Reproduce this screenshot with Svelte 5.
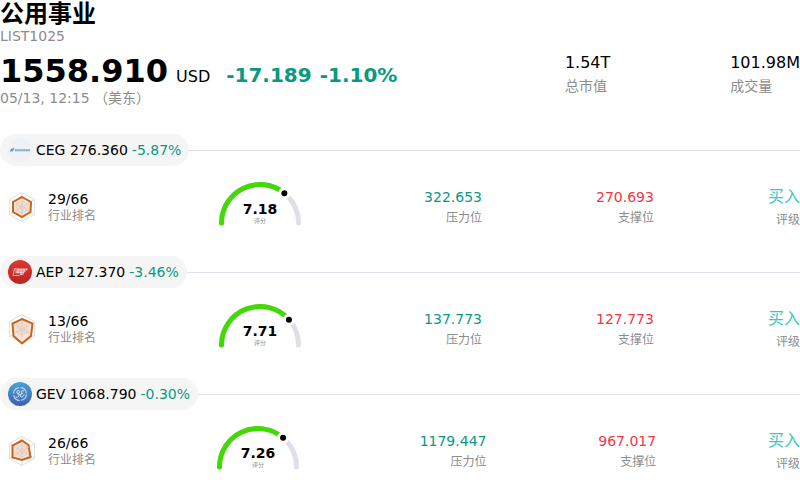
<script>
  const stocks = [
    {
      code: 'CEG', price: '276.360', change: '-5.87%', rank: '29/66', score: 7.18,
      pressure: '322.653', support: '270.693', rating: '买入',
      radar: '22,12 31,17 30.5,27 22,32 13,27 13,17',
    },
    {
      code: 'AEP', price: '127.370', change: '-3.46%', rank: '13/66', score: 7.71,
      pressure: '137.773', support: '127.773', rating: '买入',
      radar: '22,12 32.5,16.5 31,29 22,36.5 13.5,29 12.5,16.5',
    },
    {
      code: 'GEV', price: '1068.790', change: '-0.30%', rank: '26/66', score: 7.26,
      pressure: '1179.447', support: '967.017', rating: '买入',
      radar: '22,11.5 28.5,16 30.5,28 22,31 12.5,28.5 12.5,16.5',
    },
  ];

  const R = 38.5;
  const BASE = 45;

  function point(degrees) {
    const a = (degrees * Math.PI) / 180;
    return { x: 50 - R * Math.cos(a), y: BASE - R * Math.sin(a) };
  }

  function arc(degrees) {
    const p = point(degrees);
    return `M11.5 ${BASE}A${R} ${R} 0 0 1 ${p.x} ${p.y}`;
  }
</script>

<main>
  <header>
    <div class="summary">
      <h1>公用事业</h1>
      <p class="muted">LIST1025</p>
      <div class="quote">
        <strong class="price">1558.910</strong>
        <span class="currency">USD</span>
        <strong class="delta"><span>-17.189</span><span>-1.10%</span></strong>
      </div>
      <p class="muted">05/13, 12:15 （美东）</p>
    </div>
    <dl class="stat">
      <dt>总市值</dt>
      <dd>1.54T</dd>
    </dl>
    <dl class="stat">
      <dt>成交量</dt>
      <dd>101.98M</dd>
    </dl>
  </header>

  {#each stocks as s (s.code)}
    {@const dot = point(s.score * 18)}
    <section>
      <div class="title">
        <div class="pill">
          <svg class="logo" viewBox="0 0 24 24" aria-hidden="true">
            {#if s.code === 'CEG'}
              <circle cx="12" cy="12" r="12" fill="#eff2f5" />
              <path d="M1.5 13.5L3.5 10.5H7L4.5 13.5Z" fill="#5b9fc6" />
              <path d="M3.5 10.5L6.5 9.8L5 12Z" fill="#c6b84c" />
              <path d="M7 12.2h1.6M9 12.2h1.2M10.7 12.2h1.2M12.4 12.2h1.4M14.2 12.2h1.2M15.8 12.2h1.6M18 12.2h1.2M19.7 12.2h2" stroke="#6fa0d0" stroke-width="2" />
              <path d="M7 12.4h15" stroke="#8bb5dd" stroke-width="1.4" />
            {:else if s.code === 'AEP'}
              <defs>
                <linearGradient id="red" x1="0" y1="0" x2="0" y2="1">
                  <stop offset="0" stop-color="#dc3934" />
                  <stop offset="1" stop-color="#b92424" />
                </linearGradient>
              </defs>
              <circle cx="12" cy="12" r="12" fill="url(#red)" />
              <path d="M6.5 8.5H20L18.8 11H17.5L16.8 13H15.5L15 15H12L12.5 13.5H7L6.5 8.5Z" fill="#e98d87" opacity=".65" />
              <path d="M9 9.2H19.5M8.5 11H18M8.5 12.7H16M12 14.3H15.5" stroke="#fff" stroke-width=".9" stroke-dasharray="2.5 .5" />
              <path d="M8.5 8.5H6.5L5 15.5H11.5" fill="none" stroke="#f6c2be" stroke-width=".9" />
            {:else}
              <defs>
                <linearGradient id="blue" x1="0" y1="0" x2="0" y2="1">
                  <stop offset="0" stop-color="#4aa3d6" />
                  <stop offset="1" stop-color="#3c5fb0" />
                </linearGradient>
              </defs>
              <circle cx="12" cy="12" r="12" fill="url(#blue)" />
              <circle cx="12" cy="12" r="6.4" fill="none" stroke="#b8d8f3" stroke-width="1.1" stroke-dasharray="8.5 1.5" />
              <path d="M11.5 9C9.5 7.8 7.8 10 9.2 11.2C10.3 12 12 10.5 11.8 9.4M8 14.5C9 16.8 11.5 14.5 11.3 12H9.5M16 9.2C14.5 7.5 12.5 10 14 11.3H15.2M14 11.3C11.5 12 12 15.8 14.2 15C15.3 14.5 16 13.5 16.2 12.5" fill="none" stroke="#e3f1fc" stroke-width="1" />
            {/if}
          </svg>
          <span>{s.code} {s.price}</span>
          <span class="green">{s.change}</span>
        </div>
      </div>
      <div class="row">
        <div class="rank">
          <svg class="radar" viewBox="0 1 44 44" aria-hidden="true">
            <g fill="none" stroke="#dfdfe9" stroke-width="1">
              <polygon points="22,7.5 34.5,14.5 34.5,29.5 22,36.5 9.5,29.5 9.5,14.5" />
              <path d="M22 7.5V36.5M9.5 14.5L34.5 29.5M34.5 14.5L9.5 29.5" />
            </g>
            <polygon points={s.radar} fill="#f4dfd2" fill-opacity=".9" stroke="#c8631b" stroke-width="2" />
            <g fill="none" stroke="#dcc5bc" stroke-width=".7">
              <polygon points="22,16 27,19 27,25 22,28 17,25 17,19" />
              <polygon points="22,19 24.5,20.5 24.5,23.5 22,25 19.5,23.5 19.5,20.5" />
              <path d="M22 14V30M15 18L29 26M29 18L15 26" />
            </g>
          </svg>
          <div>
            <div>{s.rank}</div>
            <div class="label">行业排名</div>
          </div>
        </div>
        <svg class="gauge" viewBox="0 0 100 60" role="img" aria-label="评分 {s.score}">
          <g fill="none" stroke-width="5" stroke-linecap="round">
            <path d={arc(180)} stroke="#dfdfe9" />
            <path d={arc(s.score * 18)} stroke="#42d904" />
          </g>
          <circle cx={dot.x} cy={dot.y} r="4.5" stroke="#fff" stroke-width="3" />
          <text class="score" x="50" y="36">{s.score}</text>
          <text class="caption" x="50" y="45">评分</text>
        </svg>
        <div class="level">
          <div class="green">{s.pressure}</div>
          <div class="label">压力位</div>
        </div>
        <div class="level">
          <div class="red">{s.support}</div>
          <div class="label">支撑位</div>
        </div>
        <div class="level">
          <div class="buy">{s.rating}</div>
          <div class="label">评级</div>
        </div>
      </div>
    </section>
  {/each}
</main>

<style>
  :global(body) {
    margin: 0;
    background: #fff;
  }
  main {
    font-family: "DejaVu Sans", "Noto Sans CJK SC", sans-serif;
    font-size: 14px;
    line-height: 16px;
    color: #000;
  }
  h1, p, dl, dd {
    margin: 0;
  }
  header {
    display: flex;
    justify-content: space-between;
    height: 134px;
  }
  .summary {
    width: 445px;
  }
  h1 {
    font-size: 24px;
    line-height: 28px;
  }
  .muted, .label, dt {
    color: #8c8c8c;
  }
  .quote {
    display: flex;
    align-items: baseline;
    gap: 8px;
    height: 34px;
    margin-top: 12px;
    line-height: 30px;
  }
  .price {
    font-size: 32px;
  }
  .currency {
    font-size: 16px;
  }
  .delta {
    display: flex;
    gap: 8px;
    margin-left: 8px;
    font-size: 20px;
    color: #089981;
  }
  .stat {
    display: flex;
    flex-direction: column-reverse;
    justify-content: flex-end;
    padding-top: 51px;
    line-height: 22px;
  }
  dd {
    font-size: 16px;
    line-height: 24px;
  }
  section {
    height: 122px;
  }
  .title {
    display: flex;
    align-items: center;
  }
  .title::after {
    content: "";
    flex: 1;
    height: 1px;
    background: #dfdfe9;
  }
  .pill {
    display: flex;
    align-items: center;
    gap: 4px;
    height: 32px;
    padding: 0 8px;
    border-radius: 16px;
    background: #f5f5f5;
  }
  .logo {
    width: 24px;
    height: 24px;
  }
  .row {
    display: flex;
    align-items: center;
    justify-content: space-between;
    height: 84px;
  }
  .rank {
    display: flex;
    align-items: center;
    gap: 4px;
  }
  .radar {
    width: 44px;
    height: 44px;
  }
  .gauge {
    width: 100px;
    height: 60px;
  }
  .score {
    font-size: 14px;
    font-weight: bold;
    text-anchor: middle;
  }
  .caption {
    font-size: 6px;
    fill: #8c8c8c;
    text-anchor: middle;
  }
  .label {
    font-size: 12px;
    line-height: 18px;
  }
  .level {
    text-align: right;
    line-height: 20px;
  }
  .level .label {
    line-height: 22px;
  }
  .green {
    color: #089981;
  }
  .red {
    color: #f23645;
  }
  .buy {
    font-size: 16px;
    line-height: 24px;
    color: #3cc8c0;
  }
</style>
